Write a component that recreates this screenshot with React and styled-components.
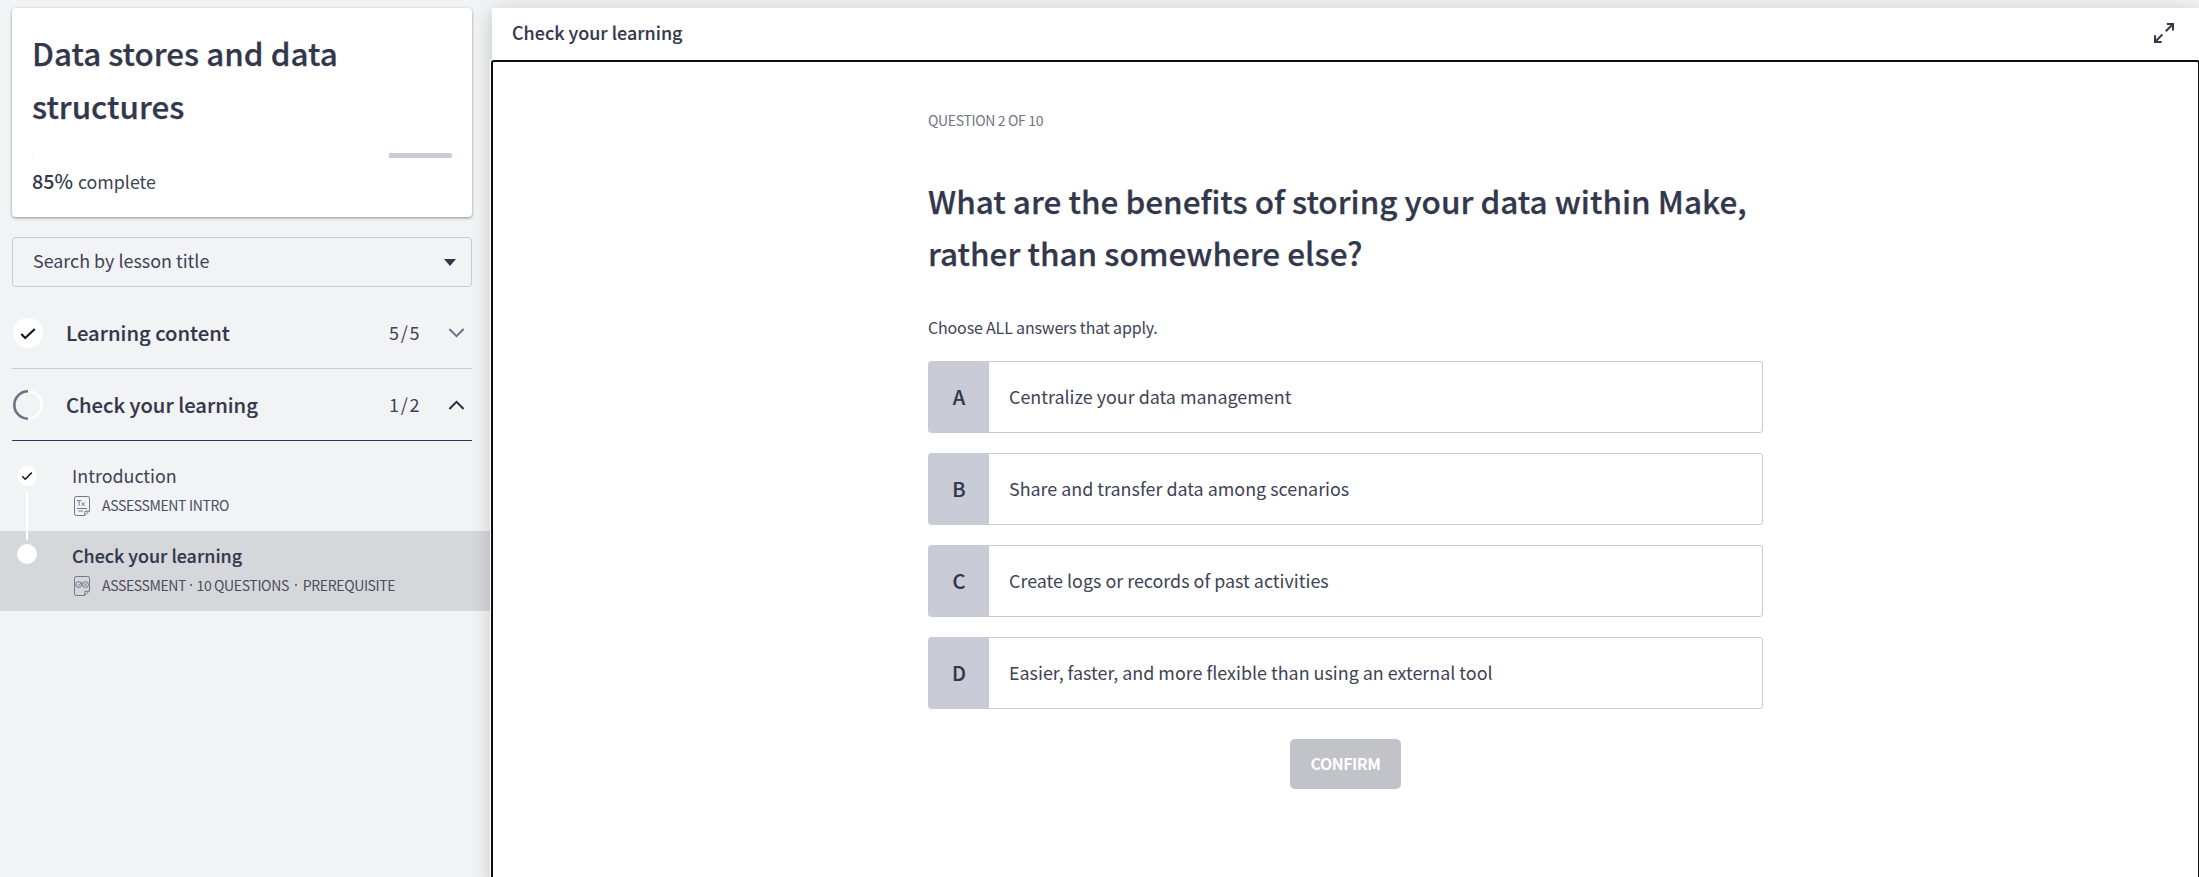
import React from "react";
import styled, { createGlobalStyle, css } from "styled-components";

const ink = "#33374c";
const bodyInk = "#3e4255";
const line = "#c9ccd6";

const GlobalStyle = createGlobalStyle`
  *, *::before, *::after { box-sizing: border-box; }
  body {
    margin: 0;
    background: #f1f3f5;
    color: ${ink};
    font-family: "Noto Sans CJK SC", "Noto Sans", sans-serif;
  }
  h1, h2, p { margin: 0; font-weight: 500; }
`;

const Page = styled.div`
  display: flex;
  height: 877px;
  overflow: hidden;
`;

/* ---------- Sidebar ---------- */

const Sidebar = styled.aside`
  width: 490px;
  padding-top: 8px;
  flex: none;
`;

const SidebarInset = styled.div`
  margin: 0 18px 0 12px;
`;

const CourseCard = styled.section`
  height: 209px;
  padding: 19px 20px 0;
  background: #fff;
  border-radius: 4px;
  box-shadow: 0 1px 3px rgba(0, 0, 0, 0.42);
`;

const CourseTitle = styled.h1`
  font-size: 31.4px;
  line-height: 52.5px;
  -webkit-text-stroke: 0.25px ${ink};
`;

const ProgressTrack = styled.div`
  height: 5px;
  margin-top: 21px;
  border-radius: 3px;
  overflow: hidden;
  background: ${line};
`;

const ProgressFill = styled.div`
  height: 100%;
  background: #fff;
`;

const ProgressText = styled.p`
  margin-top: 9px;
  font-size: 17.8px;
  font-weight: 400;
  line-height: 28px;
  color: ${bodyInk};
  strong {
    margin-right: 1px;
    font-size: 19.7px;
    font-weight: 500;
    color: ${ink};
  }
`;

const LessonSearch = styled.div`
  display: flex;
  align-items: center;
  justify-content: space-between;
  height: 50px;
  margin: 20px 0 10px;
  padding: 0 15px 0 20px;
  border: 1px solid ${line};
  border-radius: 4px;
  font-size: 17.9px;
  color: ${bodyInk};
  span { padding-bottom: 5px; }
`;

const SectionRow = styled.div`
  display: flex;
  align-items: center;
  height: 72px;
  padding: 0 7px 0 1px;
  border-bottom: 1px solid ${(p) => (p.$open ? "#33355a" : line)};
`;

const SectionTitle = styled.h2`
  flex: 1;
  margin-left: 23px;
  font-size: 20.2px;
  -webkit-text-stroke: 0.15px ${ink};
`;

const SectionCount = styled.span`
  width: 59px;
  padding-bottom: 2px;
  font-size: 18px;
  letter-spacing: 1.7px;
  color: ${bodyInk};
`;

const LessonList = styled.div`
  padding-top: 10px;
`;

const Lesson = styled.div`
  position: relative;
  display: flex;
  height: 80px;
  padding-left: 17px;
  background: ${(p) => (p.$current ? "#d6d7db" : "transparent")};
`;

const LessonDot = styled.div`
  display: grid;
  place-items: center;
  flex: none;
  width: 20px;
  height: 20px;
  margin-top: ${(p) => (p.$current ? 13 : 15)}px;
  border-radius: 50%;
  background: #fff;
`;

const Connector = styled.div`
  position: absolute;
  z-index: 1;
  left: 26px;
  top: 40px;
  width: 2px;
  height: 49px;
  background: #fff;
`;

const LessonText = styled.div`
  padding-top: 10px;
  margin-left: 35px;
`;

const LessonTitle = styled.p`
  font-size: 17.9px;
  line-height: 28px;
  font-weight: 400;
  color: ${bodyInk};
  ${(p) =>
    p.$current &&
    css`
      font-weight: 500;
      color: ${ink};
      -webkit-text-stroke: 0.15px ${ink};
    `}
`;

const LessonMeta = styled.div`
  display: flex;
  align-items: center;
  height: 20px;
  margin: 6px 0 0 2px;
  font-size: 14px;
  line-height: 20px;
  letter-spacing: -0.37px;
  color: #4a4e61;
  svg { margin: 2px 12px 0 0; flex: none; }
`;

const MetaDot = styled.i`
  width: 2px;
  height: 2px;
  margin: 0 ${(p) => (p.$wide ? 6 : 4.2)}px;
  border-radius: 1px;
  background: #4a4e61;
`;

/* ---------- Lesson panel ---------- */

const Panel = styled.main`
  position: relative;
  display: flex;
  flex-direction: column;
  flex: none;
  width: 1707px;
  height: 880px;
  margin: 8px 0 0 2px;
  background: #fff;
  box-shadow: 0 4px 20px rgba(0, 0, 0, 0.2);
`;

const PanelHeader = styled.header`
  display: flex;
  align-items: center;
  justify-content: space-between;
  height: 52px;
  padding: 0 25px 2px 20px;
`;

const PanelTitle = styled.p`
  padding-bottom: 2px;
  font-size: 17.95px;
  -webkit-text-stroke: 0.1px ${ink};
`;

const Frame = styled.div`
  display: flex;
  justify-content: center;
  flex: 1;
  width: 1709px;
  margin-left: -1px;
  padding-top: 48px;
  border: 2px solid #0e0e12;
  border-radius: 3px;
  box-shadow: 0 0 0 1px #fff;
`;

const Quiz = styled.div`
  display: flex;
  flex-direction: column;
  width: 835px;
`;

const QuizStep = styled.p`
  font-size: 14px;
  line-height: 20px;
  font-weight: 400;
  letter-spacing: -0.34px;
  color: #717585;
`;

const QuizQuestion = styled.h2`
  margin-top: 44px;
  font-size: 31.5px;
  line-height: 52px;
  -webkit-text-stroke: 0.25px ${ink};
`;

const QuizHint = styled.p`
  margin: 37px 0 22px;
  font-size: 16px;
  line-height: 24px;
  font-weight: 400;
  letter-spacing: -0.17px;
  color: ${bodyInk};
`;

const Options = styled.div`
  display: flex;
  flex-direction: column;
  gap: 20px;
`;

const Option = styled.div`
  display: flex;
  height: 72px;
  border: 1px solid ${line};
  border-radius: 3px;
  font-size: 17.9px;
  line-height: 68px;
  color: ${bodyInk};
`;

const OptionLetter = styled.span`
  width: 60px;
  margin-right: 20px;
  background: ${line};
  color: ${ink};
  text-align: center;
  font-size: 20px;
  line-height: 70px;
  font-weight: 500;
  -webkit-text-stroke: 0.2px ${ink};
`;

const ConfirmButton = styled.button`
  align-self: center;
  width: 111px;
  height: 50px;
  margin-top: 30px;
  padding: 0 0 2px;
  border: 0;
  border-radius: 5px;
  background: #c2c3c9;
  color: #fff;
  font: 700 16px "Noto Sans CJK SC", sans-serif;
  letter-spacing: -0.5px;
`;

/* ---------- Icons ---------- */

const DoneCircle = () => (
  <svg width="30" height="30" viewBox="0 0 30 30">
    <circle cx="15" cy="15" r="15" fill="#fff" />
    <path d="M8.3 16 12.2 20 21.8 11" fill="none" stroke="#16181d" strokeWidth="2.2" />
  </svg>
);

const HalfCircle = () => (
  <svg width="30" height="30" viewBox="0 0 30 30" fill="none" strokeWidth="2.6">
    <path d="M15 1.3a13.7 13.7 0 0 1 0 27.4" stroke="#fff" />
    <path d="M15 1.3a13.7 13.7 0 0 0 0 27.4" stroke="#6d7187" />
  </svg>
);

const SmallCheck = () => (
  <svg width="12" height="10" viewBox="0 0 12 10">
    <path d="M1.3 5.3 4.2 8.2 10.8 1.6" fill="none" stroke="#16181d" strokeWidth="1.5" />
  </svg>
);

const Chevron = ({ up }) => (
  <svg width="17" height="10" viewBox="0 0 17 10" fill="none" strokeWidth="2">
    {up ? <path d="M1.4 9 8.5 1.9 15.6 9" stroke="#2b2d42" /> : <path d="M1.4 1 8.5 8.1 15.6 1" stroke="#6d7187" />}
  </svg>
);

const Caret = () => (
  <svg width="12" height="7" viewBox="0 0 12 7">
    <path d="M0 0h12L6 7z" fill={ink} />
  </svg>
);

const PageOutline = ({ children }) => (
  <svg width="16" height="20" viewBox="0 0 16 20" fill="none" stroke="#74788b" strokeWidth="1">
    <path d="M10.8 19.5H2.2A1.7 1.7 0 0 1 .5 17.8V2.2A1.7 1.7 0 0 1 2.2.5h11.6a1.7 1.7 0 0 1 1.7 1.7v12.6zv-4.2h4.7" />
    {children}
  </svg>
);

const TextPageIcon = () => (
  <PageOutline>
    <path d="M2.8 4.6h4.6M5.1 4.6v5.2M7.6 6.4l3.2 3.5M10.8 6.4 7.6 9.9M3 12.5h10M4.5 15h4.5" />
  </PageOutline>
);

const QuizPageIcon = () => (
  <PageOutline>
    <circle cx="4.6" cy="8.6" r="3" />
    <circle cx="11.4" cy="8.6" r="3" />
    <path d="m3.2 8.6 1.2 1.3 3.4-3.3M10.2 7.4l2.4 2.4M12.6 7.4l-2.4 2.4" />
  </PageOutline>
);

const ExpandIcon = () => (
  <svg width="20" height="20" viewBox="0 0 20 20" fill="none" stroke={ink} strokeWidth="2">
    <path d="M12.8 1H19v6.6M19 1l-7.2 7.3M7.7 19H1v-6.8M1 19l7.4-7.6" />
  </svg>
);

const options = [
  "Centralize your data management",
  "Share and transfer data among scenarios",
  "Create logs or records of past activities",
  "Easier, faster, and more flexible than using an external tool",
];

export default function App() {
  const complete = 85;
  return (
    <Page>
      <GlobalStyle />
      <Sidebar>
        <SidebarInset>
          <CourseCard>
            <CourseTitle>
              Data stores and data
              <br />
              structures
            </CourseTitle>
            <ProgressTrack>
              <ProgressFill style={{ width: `${complete}%` }} />
            </ProgressTrack>
            <ProgressText>
              <strong>{complete}%</strong> complete
            </ProgressText>
          </CourseCard>
          <LessonSearch>
            <span>Search by lesson title</span>
            <Caret />
          </LessonSearch>
          <SectionRow>
            <DoneCircle />
            <SectionTitle>Learning content</SectionTitle>
            <SectionCount>5/5</SectionCount>
            <Chevron />
          </SectionRow>
          <SectionRow $open>
            <HalfCircle />
            <SectionTitle>Check your learning</SectionTitle>
            <SectionCount>1/2</SectionCount>
            <Chevron up />
          </SectionRow>
        </SidebarInset>
        <LessonList>
          <Lesson>
            <LessonDot>
              <SmallCheck />
            </LessonDot>
            <Connector />
            <LessonText>
              <LessonTitle>Introduction</LessonTitle>
              <LessonMeta>
                <TextPageIcon />
                ASSESSMENT INTRO
              </LessonMeta>
            </LessonText>
          </Lesson>
          <Lesson $current>
            <LessonDot $current />
            <LessonText>
              <LessonTitle $current>Check your learning</LessonTitle>
              <LessonMeta>
                <QuizPageIcon />
                ASSESSMENT
                <MetaDot />
                10 QUESTIONS
                <MetaDot $wide />
                PREREQUISITE
              </LessonMeta>
            </LessonText>
          </Lesson>
        </LessonList>
      </Sidebar>
      <Panel>
        <PanelHeader>
          <PanelTitle>Check your learning</PanelTitle>
          <ExpandIcon />
        </PanelHeader>
        <Frame>
          <Quiz>
            <QuizStep>QUESTION 2 OF 10</QuizStep>
            <QuizQuestion>
              What are the benefits of storing your data within Make,
              <br />
              rather than somewhere else?
            </QuizQuestion>
            <QuizHint>Choose ALL answers that apply.</QuizHint>
            <Options>
              {options.map((text, i) => (
                <Option key={text}>
                  <OptionLetter>{"ABCD"[i]}</OptionLetter>
                  {text}
                </Option>
              ))}
            </Options>
            <ConfirmButton>CONFIRM</ConfirmButton>
          </Quiz>
        </Frame>
      </Panel>
    </Page>
  );
}
